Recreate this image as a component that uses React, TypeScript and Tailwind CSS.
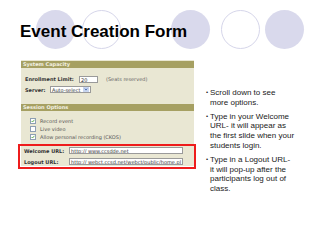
import type { ReactNode } from 'react';

// Slide: "Event Creation Form" with a small form screenshot on the left and notes on the right

function SectionBar({ children }: { children: ReactNode }) {
  return (
    <div className="h-[7px] bg-[#a6a062] pl-[2px] text-[5px] leading-[7px] font-bold text-[#f3f1e2]">
      {children}
    </div>
  );
}

function Check({ checked, label }: { checked: boolean; label: string }) {
  return (
    <div className="flex items-center h-[8px] pl-[9px] gap-[4px]">
      <span className="relative w-[6px] h-[6px] bg-white border border-[#8e9fb3]">
        {checked && (
          <svg viewBox="0 0 6 6" className="absolute inset-0 w-[4px] h-[4px]">
            <path d="M0.8 3 L2.3 4.5 L5.2 1.2" fill="none" stroke="#3d9a2e" strokeWidth="1.2" />
          </svg>
        )}
      </span>
      <span className="text-[5px] leading-[6px] text-[#555]">{label}</span>
    </div>
  );
}

function FormShot() {
  return (
    <div className="ml-[21px] w-[173px] h-[106px] bg-[#e9e7d3] pt-[1px] font-['DejaVu_Sans',Verdana,sans-serif]">
      <SectionBar>System Capacity</SectionBar>

      <div className="flex items-center h-[8px] mt-[7px] pl-[4px] text-[5px] leading-[6px]">
        <span className="w-[54px] font-bold text-[#333]">Enrollment Limit:</span>
        <span className="w-[19px] h-[7px] bg-white border border-[#9a9a9a] pl-[1px] text-[#333]">20</span>
        <span className="ml-[8px] text-[#666]">(Seats reserved)</span>
      </div>

      <div className="flex items-center h-[7px] mt-[3px] pl-[4px] text-[5px] leading-[6px]">
        <span className="w-[25px] font-bold text-[#333]">Server:</span>
        <span className="flex items-center w-[41px] h-[7px] bg-white border border-[#9a9a9a] pl-[1px] text-[#333]">
          <span className="flex-1">Auto-select</span>
          <span className="w-[6px] h-[5px] mr-[1px] bg-[#c8d6f0] flex items-center justify-center">
            <svg viewBox="0 0 6 5" className="w-[4px] h-[3px]">
              <path d="M1 1 L3 3.5 L5 1" fill="none" stroke="#2a4f9c" strokeWidth="1.2" />
            </svg>
          </span>
        </span>
      </div>

      <div className="mt-[11px]">
        <SectionBar>Session Options</SectionBar>
      </div>

      <div className="mt-[6px]">
        <Check checked label="Record event" />
        <Check checked={false} label="Live video" />
        <Check checked label="Allow personal recording (CKOS)" />
      </div>

      <div className="-ml-[3px] -mr-[2px] mt-[3px] border-2 border-[#ee1c1c] pt-[1px] pb-[2px] pl-[4px] text-[5px] leading-[6px]">
        <div className="flex items-center h-[7px]">
          <span className="w-[45px] font-bold text-[#333]">Welcome URL:</span>
          <span className="w-[114px] h-[7px] bg-white border border-[#9a9a9a] pl-[1px] text-[#333] overflow-hidden whitespace-nowrap">
            http:// www.ccsdde.net
          </span>
        </div>
        <div className="flex items-center h-[7px] mt-[4px]">
          <span className="w-[45px] font-bold text-[#333]">Logout URL:</span>
          <span className="w-[114px] h-[7px] bg-white border border-[#9a9a9a] pl-[1px] text-[#333] overflow-hidden whitespace-nowrap">
            http:// webct.ccsd.net/webct/public/home.pl
          </span>
        </div>
      </div>
    </div>
  );
}

function Bullet({ children }: { children: ReactNode }) {
  return (
    <div className="flex">
      <span className="w-[4px] text-[6px] leading-[9.8px]">•</span>
      <p className="whitespace-nowrap">{children}</p>
    </div>
  );
}

function Notes() {
  return (
    <div className="ml-[12px] pt-[28px] flex flex-col gap-[4px] text-[8px] leading-[9.8px] text-[#1a1a1a]">
      <Bullet>
        Scroll down to see
        <br />
        more options.
      </Bullet>
      <Bullet>
        Type in your Welcome
        <br />
        URL- it will appear as
        <br />
        the first slide when your
        <br />
        students login.
      </Bullet>
      <Bullet>
        Type in a Logout URL-
        <br />
        it will pop-up after the
        <br />
        participants log out of
        <br />
        class.
      </Bullet>
    </div>
  );
}

export default function App() {
  return (
    <div className="relative w-[320px] h-[240px] overflow-hidden bg-white font-['Liberation_Sans',Arial,sans-serif]">
      {/* decorative circles behind the title */}
      <div className="absolute left-[36px] top-[10px] w-[39px] h-[39px] rounded-full bg-[#d9d9ec]" />
      <div className="absolute left-[82px] top-[10px] w-[39px] h-[39px] rounded-full border border-[#d6d6ea] bg-white" />
      <div className="absolute left-[171px] top-[10px] w-[39px] h-[39px] rounded-full bg-[#d9d9ec]" />
      <div className="absolute left-[221px] top-[10px] w-[39px] h-[39px] rounded-full border border-[#d6d6ea] bg-white" />
      <div className="absolute left-[265px] top-[10px] w-[39px] h-[39px] rounded-full bg-[#d9d9ec]" />

      <h1 className="relative h-[60px] pl-[20px] pt-[23px] text-[17px] leading-[17px] font-bold text-black">
        Event Creation Form
      </h1>

      <div className="flex">
        <FormShot />
        <Notes />
      </div>
    </div>
  );
}
